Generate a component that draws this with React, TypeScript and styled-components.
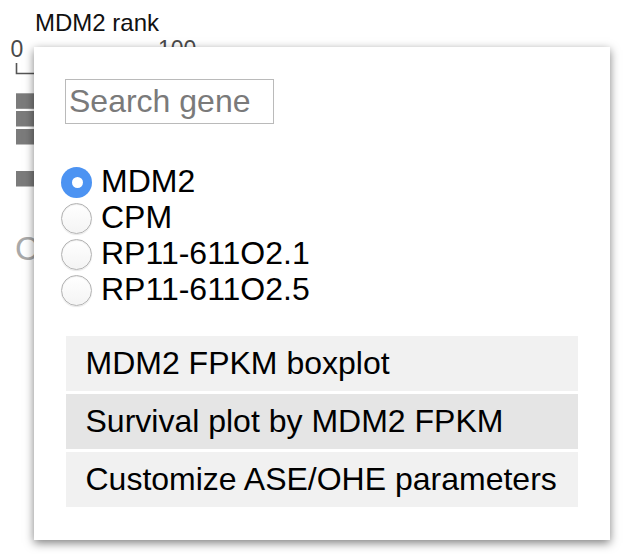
import React, { useState } from "react";
import styled, { createGlobalStyle } from "styled-components";

const GlobalStyle = createGlobalStyle`
  html, body {
    margin: 0;
    padding: 0;
    background: #ffffff;
    font-family: "Liberation Sans", Arial, Helvetica, sans-serif;
  }
`;

const Page = styled.div`
  position: relative;
  width: 638px;
  height: 554px;
  overflow: hidden;
  background: #fff;
`;

/* ---------- background chart, partly covered by the popup ---------- */

const ChartPanel = styled.div`
  padding-top: 9px;
`;

const ChartTitle = styled.div`
  margin-left: 35px;
  font-size: 24px;
  color: #111;
`;

const RankChart = styled.svg`
  display: block;
  font-family: "Liberation Sans", Arial, sans-serif;
`;

const SectionLetter = styled.div`
  margin-top: 43px;
  margin-left: 15px;
  font-size: 33px;
  color: #a9a9a9;
`;

const bars = [56.3, 74, 92, 134];

const RankAxis = () => (
  <RankChart width="220" height="150" viewBox="0 0 220 150">
    <text x="17" y="20" fontSize="23" fill="#4a4a4a" textAnchor="middle">
      0
    </text>
    <text x="158" y="20" fontSize="23" fill="#4a4a4a">
      100
    </text>
    <path d="M16.5 26 V36.5 H210" fill="none" stroke="#555" strokeWidth="1.6" />
    {bars.map((y) => (
      <rect key={y} x="16" y={y} width="190" height="15.5" fill="#7b7b7b" />
    ))}
  </RankChart>
);

/* ---------- popup ---------- */

const Popup = styled.div`
  position: absolute;
  left: 34px;
  top: 47px;
  width: 576px;
  box-sizing: border-box;
  padding: 32px 32px 33px 31px;
  background: #fff;
  box-shadow: 0 3px 9px rgba(0, 0, 0, 0.5);
`;

const SearchInput = styled.input`
  display: block;
  box-sizing: border-box;
  width: 209px;
  height: 45px;
  margin: 0;
  padding: 0 3px;
  border: 1px solid #bababa;
  border-radius: 0;
  font-family: inherit;
  font-size: 32px;
  color: #222;
  outline: none;

  &::placeholder {
    color: #7a7a7a;
  }
`;

const RadioList = styled.div`
  margin-top: 39px;
  margin-left: -4px;
  display: flex;
  flex-direction: column;
`;

const RadioRow = styled.label`
  display: flex;
  align-items: center;
  height: 36px;
  gap: 9px;
  font-size: 32px;
  color: #000;
  cursor: pointer;
`;

const RadioMark = styled.span<{ $checked: boolean }>`
  position: relative;
  flex: none;
  width: 31px;
  height: 31px;
  box-sizing: border-box;
  border-radius: 50%;
  margin-top: 2px;
  border: ${(p) => (p.$checked ? "none" : "1px solid #b3b3b3")};
  background: ${(p) =>
    p.$checked
      ? "#4c93f2"
      : "linear-gradient(#ffffff, #f4f4f4)"};
  box-shadow: ${(p) =>
    p.$checked ? "none" : "inset 0 1px 1px rgba(0,0,0,0.08), 0 1px 1px rgba(0,0,0,0.1)"};

  &::after {
    content: "";
    display: ${(p) => (p.$checked ? "block" : "none")};
    position: absolute;
    left: 10.5px;
    top: 10px;
    width: 11px;
    height: 11px;
    border-radius: 50%;
    background: #fff;
  }
`;

const ActionList = styled.div`
  margin-top: 29px;
  margin-left: 1px;
  display: flex;
  flex-direction: column;
  gap: 3px;
`;

const ActionButton = styled.div<{ $hovered?: boolean }>`
  display: flex;
  align-items: center;
  width: 512px;
  height: 55px;
  box-sizing: border-box;
  padding-left: 19.5px;
  font-size: 32px;
  color: #000;
  background: ${(p) => (p.$hovered ? "#e5e5e5" : "#f1f1f1")};
  cursor: pointer;
`;

const genes = ["MDM2", "CPM", "RP11-611O2.1", "RP11-611O2.5"];

export default function App() {
  const [gene, setGene] = useState("MDM2");

  return (
    <Page>
      <GlobalStyle />
      <ChartPanel>
        <ChartTitle>{gene} rank</ChartTitle>
        <RankAxis />
        <SectionLetter>C</SectionLetter>
      </ChartPanel>

      <Popup>
        <SearchInput placeholder="Search gene" />
        <RadioList>
          {genes.map((g) => (
            <RadioRow key={g} onClick={() => setGene(g)}>
              <RadioMark $checked={g === gene} />
              {g}
            </RadioRow>
          ))}
        </RadioList>
        <ActionList>
          <ActionButton>{gene} FPKM boxplot</ActionButton>
          <ActionButton $hovered>Survival plot by {gene} FPKM</ActionButton>
          <ActionButton>Customize ASE/OHE parameters</ActionButton>
        </ActionList>
      </Popup>
    </Page>
  );
}
